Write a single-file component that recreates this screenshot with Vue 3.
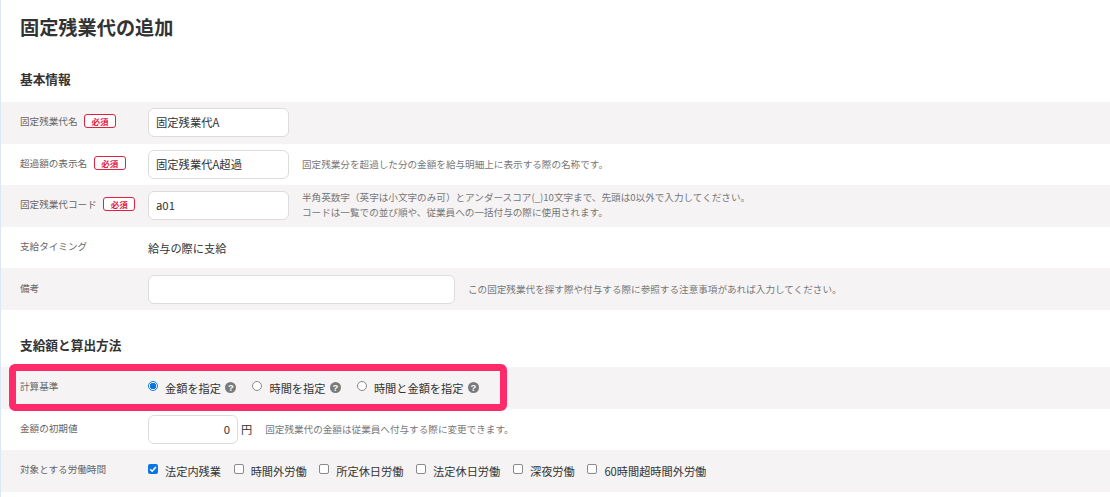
<script setup>
const radios = [
  { label: '金額を指定', on: true },
  { label: '時間を指定', on: false },
  { label: '時間と金額を指定', on: false },
]
const checks = [
  { label: '法定内残業', on: true },
  { label: '時間外労働', on: false },
  { label: '所定休日労働', on: false },
  { label: '法定休日労働', on: false },
  { label: '深夜労働', on: false },
  { label: '60時間超時間外労働', on: false },
]
</script>

<template>
  <main class="page">
    <h1 class="title">固定残業代の追加</h1>

    <h2 class="section first">基本情報</h2>
    <div class="row shade">
      <div class="label">固定残業代名<span class="req">必須</span></div>
      <div class="input text">固定残業代A</div>
    </div>
    <div class="row">
      <div class="label">超過額の表示名<span class="req">必須</span></div>
      <div class="input text">固定残業代A超過</div>
      <p class="hint">固定残業分を超過した分の金額を給与明細上に表示する際の名称です。</p>
    </div>
    <div class="row shade">
      <div class="label">固定残業代コード<span class="req">必須</span></div>
      <div class="input text">a01</div>
      <p class="hint up">半角英数字（英字は小文字のみ可）とアンダースコア(_)10文字まで、先頭は0以外で入力してください。<br>コードは一覧での並び順や、従業員への一括付与の際に使用されます。</p>
    </div>
    <div class="row">
      <div class="label">支給タイミング</div>
      <div class="value">給与の際に支給</div>
    </div>
    <div class="row shade">
      <div class="label">備考</div>
      <div class="input wide"></div>
      <p class="hint">この固定残業代を探す際や付与する際に参照する注意事項があれば入力してください。</p>
    </div>

    <h2 class="section second">支給額と算出方法</h2>
    <div class="row shade">
      <div class="label">計算基準</div>
      <div class="radios">
        <div v-for="r in radios" :key="r.label" class="opt">
          <span class="radio" :class="{ on: r.on }"></span>
          <span class="opt-text">{{ r.label }}</span>
          <span class="help">?</span>
        </div>
      </div>
      <div class="highlight"></div>
    </div>
    <div class="row">
      <div class="label">金額の初期値</div>
      <div class="input money">0</div>
      <span class="yen">円</span>
      <p class="hint near">固定残業代の金額は従業員へ付与する際に変更できます。</p>
    </div>
    <div class="row shade">
      <div class="label">対象とする労働時間</div>
      <div class="checks">
        <div v-for="c in checks" :key="c.label" class="opt-check">
          <span class="check" :class="{ on: c.on }">
            <svg v-if="c.on" viewBox="0 0 10 10" width="10" height="10"><path d="M2.2 5.2 4.2 7.2 7.9 2.9" fill="none" stroke="#fff" stroke-width="1.5"/></svg>
          </span>
          <span class="opt-text">{{ c.label }}</span>
        </div>
      </div>
    </div>
  </main>
</template>

<style>
html, body { background: #fff; overflow: hidden; }
</style>

<style scoped>
.page {
  width: 1110px;
  height: 497px;
  box-sizing: border-box;
  padding-top: 14px;
  border-left: 1px solid #dbe6f7;
  font-family: "Noto Sans CJK JP", "Noto Sans", sans-serif;
  color: #333;
  overflow: hidden;
}
.title {
  margin: 0 0 0 19px;
  font-size: 19.2px;
  line-height: 27px;
  font-weight: 700;
  color: #333;
}
.section {
  margin: 0 0 0 19px;
  font-size: 12.7px;
  line-height: 18px;
  font-weight: 700;
  color: #333;
}
.section.first { margin-top: 29px; margin-bottom: 14px; }
.section.second { margin-top: 26px; margin-bottom: 13px; }
.row {
  position: relative;
  display: flex;
  align-items: center;
  height: 41.6px;
  padding-left: 19px;
  box-sizing: border-box;
}
.shade { background: #f5f3f4; }
.label {
  flex: none;
  width: 128px;
  display: flex;
  align-items: center;
  margin-top: -3px;
  font-size: 9.6px;
  line-height: 14px;
  color: #666;
}
.req {
  margin-left: 6.5px;
  width: 32px;
  height: 14px;
  box-sizing: border-box;
  border: 1px solid #e0213f;
  border-radius: 3px;
  background: #fff;
  color: #e0213f;
  font-size: 8.5px;
  font-weight: 700;
  line-height: 12px;
  text-align: center;
}
.input {
  flex: none;
  box-sizing: border-box;
  height: 29px;
  border: 1px solid #dcdcdc;
  border-radius: 6px;
  background: #fff;
  font-size: 11.3px;
  line-height: 27px;
  color: #333;
}
.text { width: 141px; padding-left: 7px; }
.wide { width: 307px; }
.money { width: 90px; padding-right: 7px; text-align: right; }
.yen { margin-left: 3px; font-size: 11.2px; color: #333; }
.value { font-size: 11.2px; color: #333; }
.hint {
  margin: 0 0 0 13px;
  font-size: 9.6px;
  line-height: 15px;
  color: #777;
}
.hint.up { margin-top: -2px; }
.hint.near { margin-left: 13px; }
.radios, .checks { display: flex; align-items: center; }
.opt { display: flex; align-items: center; margin-right: 16px; }
.radio {
  flex: none;
  box-sizing: border-box;
  width: 10px;
  height: 10px;
  margin-top: -3px;
  border: 1px solid #8a8a8a;
  border-radius: 50%;
  background: #fff;
}
.radio.on {
  border-color: #0b76e0;
  background: radial-gradient(circle, #0b76e0 0 3px, #fff 3.4px);
}
.opt-text { margin-left: 7px; font-size: 11.2px; line-height: 16px; color: #333; }
.help {
  margin-left: 4.5px;
  width: 11px;
  height: 11px;
  border-radius: 50%;
  background: #7a7a7a;
  color: #fff;
  font-size: 9.5px;
  font-weight: 700;
  line-height: 11px;
  text-align: center;
  font-family: "Liberation Sans", sans-serif;
}
.opt-check { display: flex; align-items: center; margin-right: 12.7px; }
.check {
  flex: none;
  box-sizing: border-box;
  width: 10px;
  height: 10px;
  margin-top: -3px;
  border: 1px solid #8a8a8a;
  border-radius: 2px;
  background: #fff;
  display: block;
}
.check.on { border: 0; background: #0b76e0; }
.check svg { display: block; }
.highlight {
  position: absolute;
  left: 8px;
  top: -3px;
  width: 498px;
  height: 47px;
  box-sizing: border-box;
  border: 7px solid #ff2a6a;
  border-radius: 6px;
  pointer-events: none;
}
</style>
